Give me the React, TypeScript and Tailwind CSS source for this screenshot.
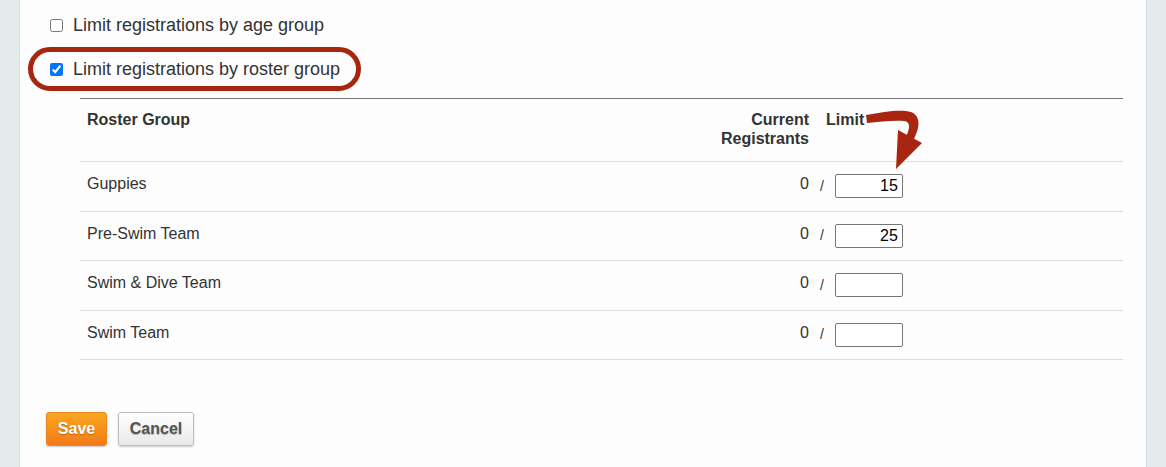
import React from "react";

type RosterRow = {
  name: string;
  current: number;
  limit: string;
};

const rows: RosterRow[] = [
  { name: "Guppies", current: 0, limit: "15" },
  { name: "Pre-Swim Team", current: 0, limit: "25" },
  { name: "Swim & Dive Team", current: 0, limit: "" },
  { name: "Swim Team", current: 0, limit: "" },
];

const CheckRow = ({ label, checked }: { label: string; checked?: boolean }) => (
  <label className="flex items-center h-[22px] leading-[22px] text-[18px]">
    <input
      type="checkbox"
      defaultChecked={checked}
      className="w-[13px] h-[13px] m-0 ml-[30px] mr-[10px]"
    />
    <span>{label}</span>
  </label>
);

export default function App() {
  return (
    <div className="relative h-[467px] overflow-hidden bg-[#e5eaed] px-[19px] font-['Liberation_Sans',Arial,sans-serif] text-[16px] text-[#333]">
      <div className="h-full bg-[#fdfdfd] border-x border-[#d5dee4] pt-[14px]">
        <CheckRow label="Limit registrations by age group" />
        <div className="mt-[22px]">
          <CheckRow label="Limit registrations by roster group" checked />
        </div>

        {/* Roster group table */}
        <div className="ml-[60px] mr-[23px] mt-[18px] border-t border-[#777]">
          <div className="flex items-start h-[63px] border-b border-[#ddd] font-bold">
            <div className="flex-1 pl-[7px] pt-[11px] leading-[19px]">Roster Group</div>
            <div className="w-[120px] pt-[11px] leading-[19px] text-right">
              Current
              <br />
              Registrants
            </div>
            <div className="w-[314px] pl-[17px] pt-[11px] leading-[19px]">Limit</div>
          </div>
          {rows.map((row) => (
            <div key={row.name} className="flex items-center h-[49.5px] border-b border-[#ddd]">
              <div className="flex-1 pl-[7px] -mt-[4px]">{row.name}</div>
              <div className="w-[120px] text-right -mt-[4px]">{row.current}</div>
              <div className="w-[314px] flex items-center">
                <span className="ml-[11px] mr-[11px] text-[14px]">/</span>
                <input
                  type="text"
                  defaultValue={row.limit}
                  className="w-[68px] h-[24px] border border-[#767676] rounded-[2px] bg-white text-right pr-[4px] text-[16px] text-black outline-none"
                />
              </div>
            </div>
          ))}
        </div>

        <div className="flex gap-[11px] ml-[26px] mt-[52px]">
          <button className="h-[34px] w-[61px] rounded-[3px] border border-[#e8861c] bg-gradient-to-b from-[#f9a61e] to-[#f27a1a] text-white font-bold [text-shadow:0_1px_1px_rgba(120,50,0,0.45)] shadow-[0_1px_2px_rgba(0,0,0,0.2)]">
            Save
          </button>
          <button className="h-[34px] w-[76px] rounded-[3px] border border-[#bdbdbd] bg-gradient-to-b from-[#ffffff] to-[#e9e9e9] text-[#555] font-bold [text-shadow:0_1px_1px_rgba(0,0,0,0.25)] shadow-[0_1px_2px_rgba(0,0,0,0.2)]">
            Cancel
          </button>
        </div>
      </div>

      {/* Annotation: red ring around the roster checkbox */}
      <div className="absolute left-[28px] top-[47px] w-[333px] h-[44px] rounded-full border-[5px] border-[#a8250f] pointer-events-none" />

      {/* Annotation: curved arrow pointing to the limit inputs */}
      <svg
        className="absolute left-0 top-0 pointer-events-none"
        width="1166"
        height="467"
        viewBox="0 0 1166 467"
      >
        <path
          d="M866 115 C 884 112, 900 109, 911 112 C 921 116, 920 127, 914 139 L 906 137 C 910 128, 911 122, 904 121 C 893 120, 880 122, 867 123 Z"
          fill="#a8250f"
        />
        <polygon points="898,130 922,143 896,169" fill="#a8250f" />
      </svg>
    </div>
  );
}
